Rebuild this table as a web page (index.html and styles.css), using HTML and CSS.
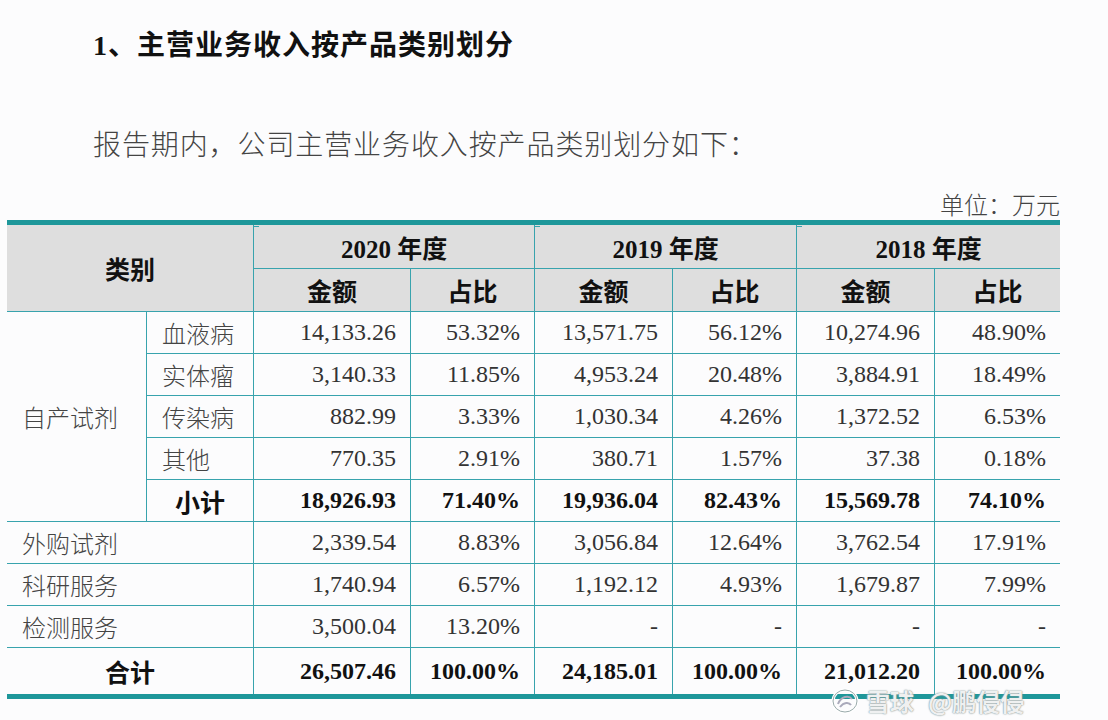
FILE: index.html
```html
<!DOCTYPE html>
<html lang="zh-CN">
<head>
<meta charset="utf-8">
<title>主营业务收入按产品类别划分</title>
<link rel="stylesheet" href="styles.css">
</head>
<body>
<div class="page">
  <h2 class="title">1、主营业务收入按产品类别划分</h2>
  <p class="intro">报告期内，公司主营业务收入按产品类别划分如下：</p>
  <div class="unit">单位：万元</div>
  <table class="rev">
    <colgroup>
      <col><col><col><col><col><col><col><col>
    </colgroup>
    <thead>
      <tr class="hr1">
        <th colspan="2" rowspan="2" class="cat">类别</th>
        <th colspan="2" class="yr">2020 年度</th>
        <th colspan="2" class="yr">2019 年度</th>
        <th colspan="2" class="yr">2018 年度</th>
      </tr>
      <tr class="hr2">
        <th>金额</th><th>占比</th>
        <th>金额</th><th>占比</th>
        <th>金额</th><th>占比</th>
      </tr>
    </thead>
    <tbody>
      <tr>
        <td rowspan="5" class="lbl">自产试剂</td>
        <td class="lbl">血液病</td>
        <td>14,133.26</td><td>53.32%</td>
        <td>13,571.75</td><td>56.12%</td>
        <td>10,274.96</td><td>48.90%</td>
      </tr>
      <tr>
        <td class="lbl">实体瘤</td>
        <td>3,140.33</td><td>11.85%</td>
        <td>4,953.24</td><td>20.48%</td>
        <td>3,884.91</td><td>18.49%</td>
      </tr>
      <tr>
        <td class="lbl">传染病</td>
        <td>882.99</td><td>3.33%</td>
        <td>1,030.34</td><td>4.26%</td>
        <td>1,372.52</td><td>6.53%</td>
      </tr>
      <tr>
        <td class="lbl">其他</td>
        <td>770.35</td><td>2.91%</td>
        <td>380.71</td><td>1.57%</td>
        <td>37.38</td><td>0.18%</td>
      </tr>
      <tr class="sub">
        <td class="mid">小计</td>
        <td>18,926.93</td><td>71.40%</td>
        <td>19,936.04</td><td>82.43%</td>
        <td>15,569.78</td><td>74.10%</td>
      </tr>
      <tr>
        <td colspan="2" class="lbl">外购试剂</td>
        <td>2,339.54</td><td>8.83%</td>
        <td>3,056.84</td><td>12.64%</td>
        <td>3,762.54</td><td>17.91%</td>
      </tr>
      <tr>
        <td colspan="2" class="lbl">科研服务</td>
        <td>1,740.94</td><td>6.57%</td>
        <td>1,192.12</td><td>4.93%</td>
        <td>1,679.87</td><td>7.99%</td>
      </tr>
      <tr>
        <td colspan="2" class="lbl">检测服务</td>
        <td>3,500.04</td><td>13.20%</td>
        <td>-</td><td>-</td>
        <td>-</td><td>-</td>
      </tr>
      <tr class="total">
        <td colspan="2" class="mid">合计</td>
        <td>26,507.46</td><td>100.00%</td>
        <td>24,185.01</td><td>100.00%</td>
        <td>21,012.20</td><td>100.00%</td>
      </tr>
    </tbody>
  </table>
  <div class="wm">
    <svg class="wm-logo" width="30" height="26" viewBox="0 0 30 26">
      <ellipse cx="15" cy="13" rx="12" ry="11" fill="none" stroke="#ffffff" stroke-width="3"/>
      <ellipse cx="15" cy="13" rx="12" ry="11" fill="none" stroke="#9aa" stroke-width="1"/>
      <path d="M8 16 C11 8, 19 7, 22 11 M10 19 C14 14, 19 14, 21 17" fill="none" stroke="#aab" stroke-width="2"/>
    </svg>
    <span class="wm-big">雪球</span>
    <span class="wm-at">@鹏侵侵</span>
  </div>
</div>
</body>
</html>
```

FILE: styles.css
```css
html, body {
  margin: 0;
  padding: 0;
  background: #fcfcfd;
}

.page {
  position: relative;
  width: 1108px;
  height: 720px;
  overflow: hidden;
  font-family: "Liberation Serif", "Noto Sans CJK SC", serif;
}

.title {
  margin: 30px 0 0 93px;
  font-size: 28px;
  line-height: 32px;
  font-weight: 700;
  color: #111;
  letter-spacing: 1px;
}

.intro {
  margin: 65px 0 0 93px;
  font-family: "Noto Sans CJK SC", sans-serif;
  font-size: 28px;
  line-height: 32px;
  font-weight: 300;
  color: #444;
  letter-spacing: 0.9px;
}

.unit {
  margin: 31px 48px 0 0;
  text-align: right;
  font-family: "Noto Sans CJK SC", sans-serif;
  font-size: 24px;
  line-height: 28px;
  font-weight: 300;
  color: #444;
}

.rev {
  margin: 2px 0 0 7px;
  width: 1053px;
  table-layout: fixed;
  border-collapse: separate;
  border-spacing: 0;
  border-top: 5px solid #1e979a;
  border-bottom: 5px solid #1e979a;
}

.rev col:nth-child(1) { width: 140px; }
.rev col:nth-child(2) { width: 107px; }
.rev col:nth-child(3) { width: 157px; }
.rev col:nth-child(4) { width: 124px; }
.rev col:nth-child(5) { width: 138px; }
.rev col:nth-child(6) { width: 124px; }
.rev col:nth-child(7) { width: 138px; }
.rev col:nth-child(8) { width: 125px; }

.rev th,
.rev td {
  box-sizing: border-box;
  padding: 0 14px;
  border-bottom: 1px solid #38a3ad;
  vertical-align: middle;
  white-space: nowrap;
}

.rev th:not(:last-child),
.rev td:not(:last-child) {
  border-right: 1px solid #38a3ad;
}

.rev th {
  background: #dedede;
  font-size: 25px;
  font-weight: 700;
  color: #111;
  text-align: center;
}

.rev .hr1 { height: 44px; }
.rev .hr1 th { height: 44px; }
.rev .hr2 { height: 43px; }
.rev .hr2 th { height: 43px; }

.rev .yr {
  position: relative;
}

.rev .yr::before {
  content: "";
  position: absolute;
  left: -1px;
  top: 1px;
  width: 6px;
  height: 1px;
  background: #38a3ad;
}

.rev tbody tr { height: 42px; }

.rev td {
  height: 42px;
  font-size: 24px;
  color: #333;
  text-align: right;
}

.rev td.lbl {
  text-align: left;
  padding-left: 15px;
  font-family: "Noto Sans CJK SC", sans-serif;
  font-weight: 300;
  color: #444;
}

.rev td.mid {
  text-align: center;
  padding: 0;
  font-size: 25px;
  font-weight: 700;
  color: #111;
}

.rev .sub td,
.rev .total td {
  font-weight: 700;
  color: #111;
}

.rev .total { height: 46px; }
.rev .total td {
  height: 46px;
  border-bottom: 0;
}

.wm {
  position: absolute;
  left: 830px;
  top: 684px;
  width: 260px;
  height: 34px;
  display: flex;
  align-items: center;
  gap: 6px;
  pointer-events: none;
}

.wm-big,
.wm-at {
  font-family: "Noto Sans CJK SC", sans-serif;
  font-size: 24px;
  line-height: 30px;
  font-weight: 700;
  color: rgba(255, 255, 255, 0.88);
  text-shadow: 0 0 1px #7f8a8c, 0 0 2px #9aa;
}

.wm-at {
  margin-left: 8px;
}
```
